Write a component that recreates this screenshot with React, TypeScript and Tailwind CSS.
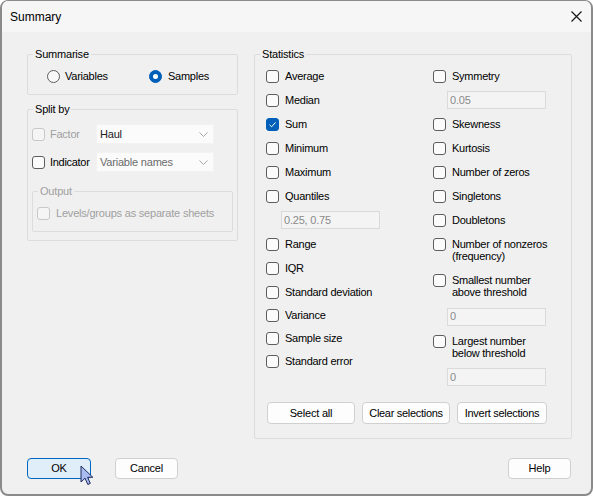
import clsx from "clsx";

const FONT = "font-['Liberation_Sans',Arial,sans-serif]";

function Check({ checked, disabled }: { checked?: boolean; disabled?: boolean }) {
  return (
    <span
      className={clsx(
        "flex h-[13px] w-[13px] shrink-0 items-center justify-center rounded-[3px] border",
        checked
          ? "border-[#005fb8] bg-[#005fb8]"
          : disabled
            ? "border-[#c8c8c8] bg-[#f5f5f5]"
            : "border-[#5d5d5d] bg-[#fbfbfb]"
      )}
    >
      {checked && (
        <svg width="11" height="11" viewBox="0 0 11 11" fill="none">
          <path d="M2.5 5.8 L4.6 7.8 L8.6 3.4" stroke="white" strokeWidth="1" />
        </svg>
      )}
    </span>
  );
}

function Radio({ selected }: { selected?: boolean }) {
  return (
    <span
      className={clsx(
        "flex h-[13px] w-[13px] shrink-0 items-center justify-center rounded-full border",
        selected ? "border-[#005fb8] bg-[#005fb8]" : "border-[#5d5d5d] bg-[#f9f9f9]"
      )}
    >
      {selected && <span className="h-[5px] w-[5px] rounded-full bg-white" />}
    </span>
  );
}

function Legend({ children, disabled }: { children: string; disabled?: boolean }) {
  return (
    <legend
      className={clsx(
        "ml-[5px] px-[2px] text-[11px] leading-[14px] tracking-[-0.2px]",
        disabled ? "text-[#a0a0a0]" : "text-black"
      )}
    >
      {children}
    </legend>
  );
}

function CheckRow({
  label,
  checked,
  h = "h-[24px]",
}: {
  label: string;
  checked?: boolean;
  h?: string;
}) {
  return (
    <div className={clsx("flex items-center gap-[6px]", h)}>
      <Check checked={checked} />
      <span className="text-[11px] leading-[13px] tracking-[-0.25px] text-black">{label}</span>
    </div>
  );
}

function CheckRow2({ lines, h }: { lines: [string, string]; h: string }) {
  return (
    <div className={clsx("flex items-start gap-[6px] pt-[6px]", h)}>
      <Check />
      <span className="-mt-[0.5px] text-[11px] leading-[12.5px] tracking-[-0.25px] text-black">
        {lines[0]}
        <br />
        {lines[1]}
      </span>
    </div>
  );
}

function ValueBox({ value }: { value: string }) {
  return (
    <div className="flex h-[18px] w-[99px] items-center border border-[#dadada] bg-[#f4f4f4] pl-[2px] text-[11px] tracking-[-0.2px] text-[#8a8a8a]">
      {value}
    </div>
  );
}

function Select({ value, muted }: { value: string; muted?: boolean }) {
  return (
    <div className="flex h-[20px] w-[118px] items-center justify-between border border-[#f2f2f2] bg-[#fbfbfb] pl-[3px] pr-[5px]">
      <span
        className={clsx(
          "text-[11px] tracking-[-0.2px]",
          muted ? "text-[#6b6b6b]" : "text-[#222]"
        )}
      >
        {value}
      </span>
      <svg width="9" height="5" viewBox="0 0 9 5" fill="none">
        <path d="M0.5 0.5 L4.5 4.5 L8.5 0.5" stroke="#a6a6a6" strokeWidth="1" />
      </svg>
    </div>
  );
}

function Button({
  label,
  w,
  primary,
}: {
  label: string;
  w: string;
  primary?: boolean;
}) {
  return (
    <div
      className={clsx(
        "flex h-[21px] items-center justify-center rounded-[4px] text-[11px] tracking-[-0.2px] text-black",
        w,
        primary
          ? "border-[1.5px] border-[#0067c0] bg-[#e0eef9]"
          : "border border-[#d0d0d0] bg-[#fdfdfd]"
      )}
    >
      {label}
    </div>
  );
}

export default function App() {
  return (
    <div
      className={clsx(
        FONT,
        "relative flex h-[496px] w-[593px] flex-col overflow-hidden rounded-[8px] border-x-2 border-b-2 border-t border-[#8a8a8a] bg-[#f0f0f0]"
      )}
    >
      {/* Title bar */}
      <div className="flex h-[31px] shrink-0 items-center justify-between bg-[#f6f6f6] pl-[8px] pr-[9px]">
        <span className="text-[12px] text-black">Summary</span>
        <svg width="11" height="11" viewBox="0 0 11 11" fill="none">
          <path d="M0.5 0.5 L10.5 10.5 M10.5 0.5 L0.5 10.5" stroke="#111" strokeWidth="1.1" />
        </svg>
      </div>

      {/* Body */}
      <div className="flex pl-[25px] pt-[15px]">
        {/* Left column */}
        <div className="flex w-[211px] flex-col">
          <fieldset className="h-[48px] rounded-[2px] border border-[#dcdcdc]">
            <Legend>Summarise</Legend>
            <div className="ml-[19px] mt-[3px] flex h-[24px] items-center">
              <div className="flex w-[102px] items-center gap-[5px]">
                <Radio />
                <span className="text-[11px] tracking-[-0.25px] text-black">Variables</span>
              </div>
              <div className="flex items-center gap-[6px]">
                <Radio selected />
                <span className="text-[11px] tracking-[-0.25px] text-black">Samples</span>
              </div>
            </div>
          </fieldset>

          <fieldset className="mt-[7px] h-[139px] rounded-[2px] border border-[#dcdcdc]">
            <Legend>Split by</Legend>
            <div className="ml-[4px] mt-[6px] flex h-[24px] items-center">
              <Check disabled />
              <span className="ml-[5px] w-[46px] text-[11px] tracking-[-0.25px] text-[#a0a0a0]">
                Factor
              </span>
              <Select value="Haul" />
            </div>
            <div className="ml-[4px] mt-[4px] flex h-[24px] items-center">
              <Check />
              <span className="ml-[5px] w-[46px] text-[11px] tracking-[-0.3px] text-black">
                Indicator
              </span>
              <Select value="Variable names" muted />
            </div>
            <fieldset className="ml-[4px] mt-[10px] h-[48px] w-[201px] rounded-[2px] border border-[#dcdcdc]">
              <Legend disabled>Output</Legend>
              <div className="ml-[4px] mt-[3px] flex h-[24px] items-center gap-[6px]">
                <Check disabled />
                <span className="text-[11px] tracking-[-0.2px] text-[#a0a0a0]">
                  Levels/groups as separate sheets
                </span>
              </div>
            </fieldset>
          </fieldset>
        </div>

        {/* Statistics */}
        <fieldset className="ml-[16px] h-[392px] w-[318px] rounded-[2px] border border-[#dcdcdc]">
          <Legend>Statistics</Legend>
          <div className="ml-[11px] mt-[3px] flex">
            <div className="flex w-[167px] flex-col">
              <CheckRow label="Average" />
              <CheckRow label="Median" />
              <CheckRow label="Sum" checked />
              <CheckRow label="Minimum" />
              <CheckRow label="Maximum" />
              <CheckRow label="Quantiles" />
              <div className="flex h-[24px] items-center pl-[15px]">
                <ValueBox value="0.25, 0.75" />
              </div>
              <CheckRow label="Range" />
              <CheckRow label="IQR" />
              <CheckRow label="Standard deviation" />
              <CheckRow label="Variance" h="h-[23px]" />
              <CheckRow label="Sample size" h="h-[23px]" />
              <CheckRow label="Standard error" h="h-[23px]" />
            </div>
            <div className="flex flex-col">
              <CheckRow label="Symmetry" />
              <div className="flex h-[24px] items-center pl-[14px]">
                <ValueBox value="0.05" />
              </div>
              <CheckRow label="Skewness" />
              <CheckRow label="Kurtosis" />
              <CheckRow label="Number of zeros" />
              <CheckRow label="Singletons" />
              <CheckRow label="Doubletons" />
              <CheckRow2 lines={["Number of nonzeros", "(frequency)"]} h="h-[36px]" />
              <CheckRow2 lines={["Smallest number", "above threshold"]} h="h-[36px]" />
              <div className="flex h-[25px] items-center pl-[14px]">
                <ValueBox value="0" />
              </div>
              <CheckRow2 lines={["Largest number", "below threshold"]} h="h-[36px]" />
              <div className="flex h-[24px] items-center pl-[14px]">
                <ValueBox value="0" />
              </div>
            </div>
          </div>
          <div className="ml-[12px] mt-[13px] flex gap-[7px]">
            <div className="flex h-[22px] w-[88px] items-center justify-center rounded-[4px] border border-[#d0d0d0] bg-[#fdfdfd] text-[11px] tracking-[-0.2px]">
              Select all
            </div>
            <div className="flex h-[22px] w-[88px] items-center justify-center rounded-[4px] border border-[#d0d0d0] bg-[#fdfdfd] text-[11px] tracking-[-0.3px]">
              Clear selections
            </div>
            <div className="flex h-[22px] w-[90px] items-center justify-center rounded-[4px] border border-[#d0d0d0] bg-[#fdfdfd] text-[11px] tracking-[-0.3px]">
              Invert selections
            </div>
          </div>
        </fieldset>
      </div>

      {/* Footer buttons */}
      <div className="mt-[19px] flex items-center pl-[25px] pr-[20px]">
        <Button label="OK" w="w-[64px]" primary />
        <div className="ml-[24px]">
          <Button label="Cancel" w="w-[63px]" />
        </div>
        <div className="ml-auto">
          <Button label="Help" w="w-[63px]" />
        </div>
      </div>

      {/* Mouse cursor over OK */}
      <svg
        className="absolute left-[78px] top-[464px]"
        width="14"
        height="21"
        viewBox="0 0 14 21"
        fill="none"
      >
        <path
          d="M1 1 L1 17 L5 13.2 L7.8 19.5 L10.3 18.4 L7.6 12.3 L12.8 12.3 Z"
          fill="#a9bbef"
          stroke="#1d2a5e"
          strokeWidth="1"
          strokeLinejoin="round"
        />
      </svg>
    </div>
  );
}
